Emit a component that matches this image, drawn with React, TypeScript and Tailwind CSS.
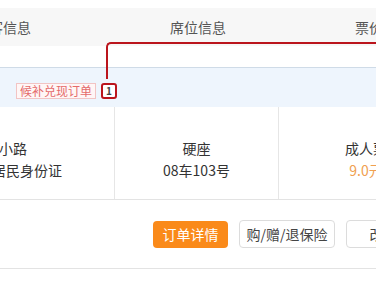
import React from "react";

const font = { fontFamily: '"Noto Sans CJK SC", "Noto Sans", sans-serif' };

export default function App() {
  return (
    <div
      className="relative w-[376px] h-[282px] overflow-hidden bg-white"
      style={font}
    >
      <div className="h-[8px]" />
      {/* header */}
      <div className="h-[38px] bg-[#f7f7f7] overflow-hidden">
        <div className="flex h-full ml-[-111px] w-[640px] text-[14px] text-[#555]">
          <div className="w-[228px] flex items-center justify-center">乘客信息</div>
          <div className="w-[162px] flex items-center justify-center">席位信息</div>
          <div className="w-[208px] flex items-center justify-center">票价信息</div>
        </div>
      </div>
      <div className="h-[21px]" />
      {/* blue band */}
      <div className="h-[40px] border-t border-[#cfdbe7] bg-[#eef5fd] flex items-center pl-[16px] pt-[6px]">
        <span className="h-[16px] px-[3px] flex items-center border border-[#f2c4c4] bg-[#fff6f6] text-[12px] leading-none text-[#e46a6a]">
          候补兑现订单
        </span>
        <span className="ml-[5px] w-[16px] h-[16px] flex items-center justify-center border-2 border-[#bb151d] rounded-[3px] bg-white text-[10px] font-bold text-[#444] leading-none">
          1
        </span>
      </div>
      {/* body row */}
      <div className="h-[93px] border-b border-[#e3e3e3] overflow-hidden">
        <div className="flex h-full ml-[-111px] w-[600px] text-[14px] text-[#333]">
          <div className="w-[226px] pl-[23px] pt-[11px] flex flex-col items-center justify-center leading-[22px] border-r border-[#e6e6e6]">
            <span>小路</span>
            <span>中国居民身份证</span>
          </div>
          <div className="w-[164px] pt-[11px] flex flex-col items-center justify-center leading-[22px] border-r border-[#e6e6e6]">
            <span>硬座</span>
            <span>08车103号</span>
          </div>
          <div className="w-[174px] pt-[11px] flex flex-col items-center justify-center leading-[22px]">
            <span>成人票</span>
            <span className="text-[#f0a050]">9.0元</span>
          </div>
        </div>
      </div>
      {/* buttons */}
      <div className="h-[69px] border-b border-[#e3e3e3] flex items-center pl-[153px] gap-[11px] overflow-hidden">
        <button className="shrink-0 w-[75px] h-[27px] rounded-[4px] bg-[#fa8a1a] text-white text-[14px] flex items-center justify-center">
          订单详情
        </button>
        <button className="shrink-0 w-[96px] h-[28px] rounded-[4px] border border-[#dcdcdc] bg-white text-[#444] text-[14px] flex items-center justify-center">
          购/赠/退保险
        </button>
        <button className="shrink-0 w-[75px] h-[28px] rounded-[4px] border border-[#dcdcdc] bg-white text-[#444] text-[14px] flex items-center justify-center">
          改签
        </button>
      </div>
      {/* red annotation line */}
      <div className="absolute left-[106px] top-[42px] w-[280px] h-[37px] border-t-2 border-l-2 border-[#bb151d] rounded-tl-[5px]" />
    </div>
  );
}
